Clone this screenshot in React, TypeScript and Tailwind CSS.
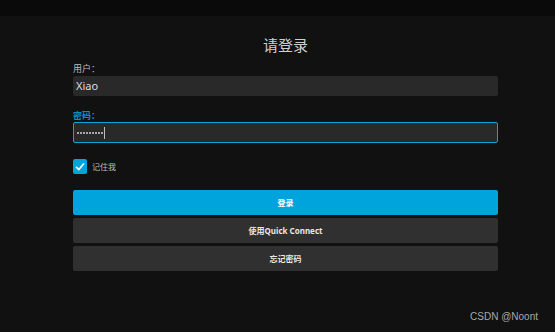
import React from "react";

export default function App() {
  const font = { fontFamily: '"Noto Sans", "Noto Sans CJK SC", sans-serif' };
  return (
    <div className="relative w-[555px] h-[332px] bg-[#111111] flex flex-col overflow-hidden" style={font}>
      <div className="h-[16px] bg-[#0a0a0a] shrink-0" />
      <div className="flex">
        <div className="ml-[73px] w-[425px] flex flex-col">
          <div className="mt-[21px] text-center text-[15px] leading-[17px] text-[#cfcfcf]">请登录</div>
          <div className="mt-[10px] text-[9px] leading-[10px] text-[#bdbdbd]">用户：</div>
          <div className="mt-[2px] h-[20px] bg-[#292929] rounded-[2px] flex items-center px-[3px] text-[11px] text-[#dcdcdc]">
            Xiao
          </div>
          <div className="mt-[15px] text-[9px] leading-[10px] font-bold text-[#0a8fc2]">密码：</div>
          <div className="mt-[1px] h-[21px] bg-[#292929] border border-[#0ea3d8] rounded-[2px] flex items-center pl-[3px]">
            <div className="flex gap-[1px]">
              {Array.from({ length: 9 }).map((_, i) => (
                <span key={i} className="w-[2px] h-[2px] rounded-full bg-[#d0d0d0]" />
              ))}
            </div>
            <span className="ml-[1px] w-[1px] h-[12px] bg-[#bbbbbb]" />
          </div>
          <div className="mt-[16px] flex items-center gap-[5px] h-[15px]">
            <div className="w-[14px] h-[15px] bg-[#00a4dc] rounded-[2px] flex items-center justify-center">
              <svg width="10" height="9" viewBox="0 0 10 9">
                <polyline points="1,4.8 3.8,7.5 9,1.5" fill="none" stroke="#ffffff" strokeWidth="1.6" />
              </svg>
            </div>
            <span className="text-[8px] leading-[10px] text-[#bdbdbd]">记住我</span>
          </div>
          <div className="mt-[16px] flex flex-col gap-[3px]">
            <button className="h-[25px] bg-[#00a4dc] rounded-[2px] text-[8px] font-bold text-white flex items-center justify-center">
              登录
            </button>
            <button className="h-[25px] bg-[#303030] rounded-[2px] text-[8px] font-bold text-[#e6e6e6] flex items-center justify-center">
              使用Quick Connect
            </button>
            <button className="h-[25px] bg-[#303030] rounded-[2px] text-[8px] font-bold text-[#e6e6e6] flex items-center justify-center">
              忘记密码
            </button>
          </div>
        </div>
      </div>
      <div
        className="absolute right-[17px] bottom-[9px] text-[10px] leading-[12px] text-[#a8a8a8]"
        style={{ fontFamily: '"Liberation Sans", Arial, sans-serif' }}
      >
        CSDN @Noont
      </div>
    </div>
  );
}
